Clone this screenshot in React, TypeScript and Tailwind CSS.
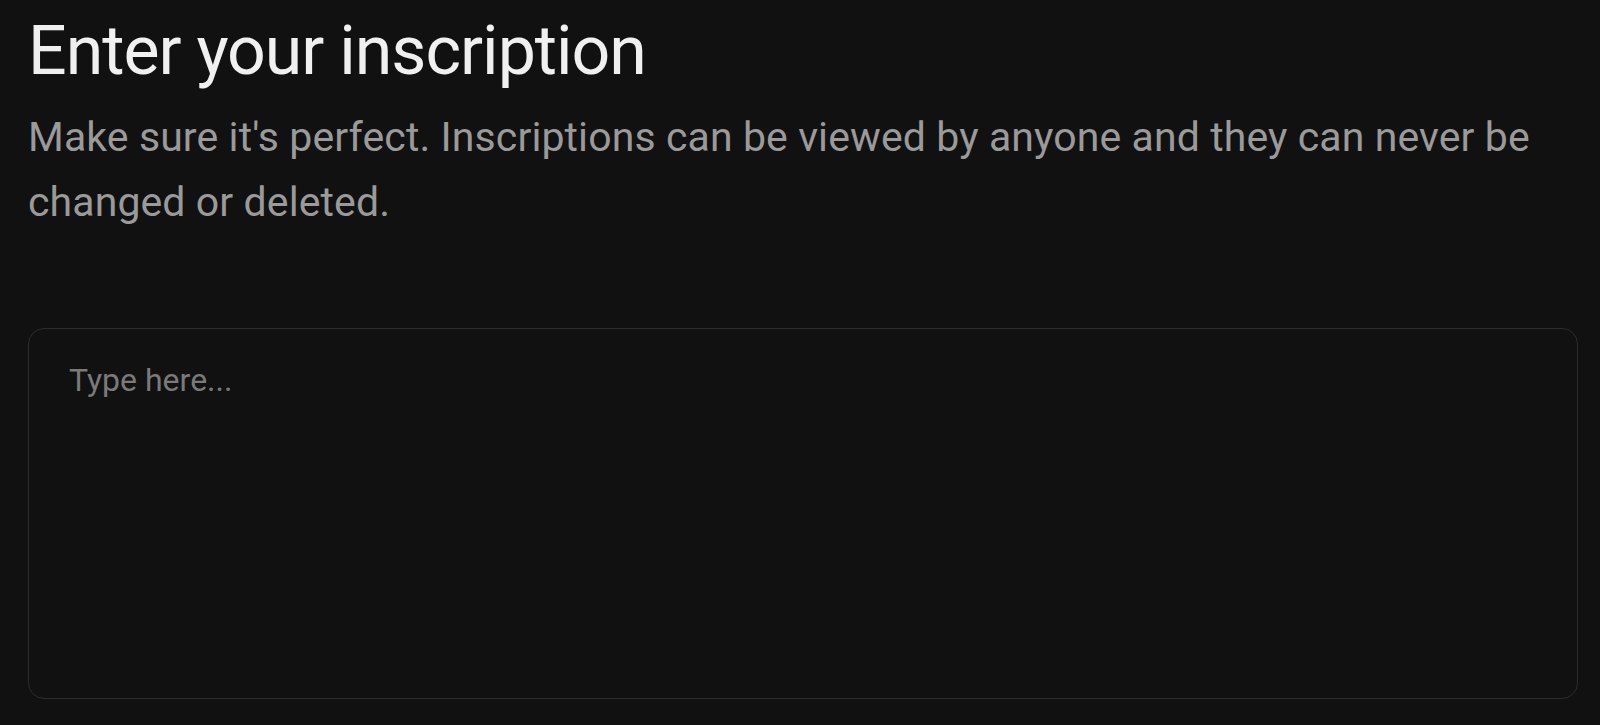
export default function App() {
  return (
    <div className="min-h-screen w-full bg-[#111111] pl-7 pr-[22px] pt-[15px] font-['Roboto',sans-serif]">
      <h1 className="text-[68px] leading-[72px] font-normal tracking-[-1px] text-[#f0f0f0]">
        Enter your inscription
      </h1>
      <p className="mt-[18px] text-[41px] leading-[65px] tracking-[0.1px] text-[#9a9a9a]">
        Make sure it's perfect. Inscriptions can be viewed by anyone and they can never be
        changed or deleted.
      </p>
      <textarea
        placeholder="Type here..."
        className="mt-[93px] block h-[371px] w-full resize-none rounded-2xl border border-[#2c2c2c] bg-[#111111] px-10 pt-[31px] text-[32px] leading-[40px] text-[#e5e5e5] placeholder:text-[#7a7a7a] outline-none"
      />
    </div>
  );
}
